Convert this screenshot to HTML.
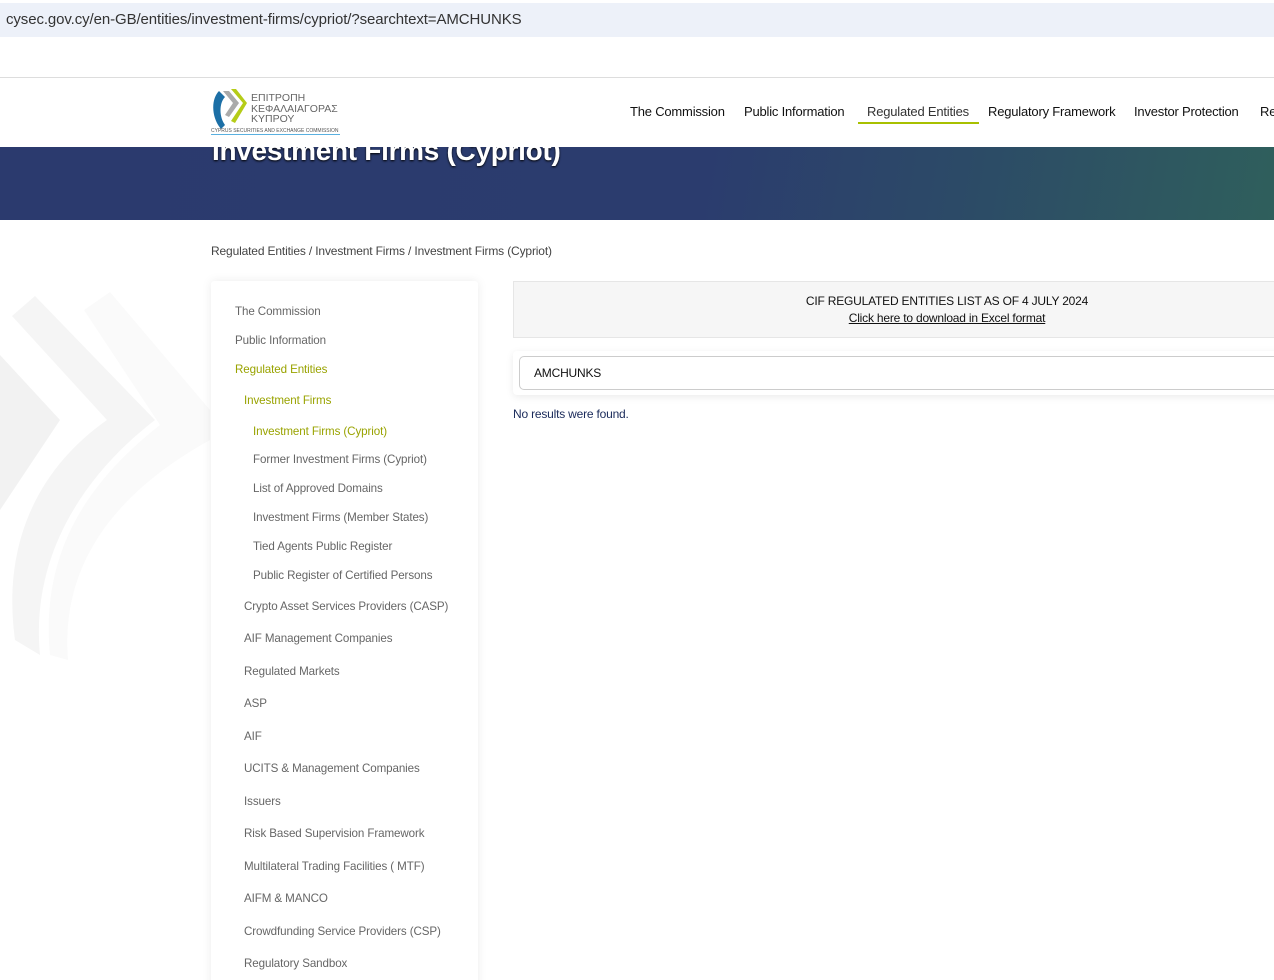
<!DOCTYPE html>
<html style="overflow:hidden;height:980px"><head><meta charset="utf-8"><style>
*{margin:0;padding:0;box-sizing:border-box}
body{width:1274px;height:980px;overflow:hidden;background:#fff;font-family:"Liberation Sans",Arial,sans-serif;position:relative}
.abs{position:absolute;white-space:nowrap}
.url{top:3px;left:0;width:1274px;height:34px;background:#edf1f9}
.url span{position:absolute;left:6px;top:8px;font-size:15px;color:#333;letter-spacing:-0.1px}
.hdr{top:77px;left:0;width:1274px;height:70px;background:#fff;border-top:1px solid #ddd;z-index:2}
.nav{font-size:13px;color:#111;top:26px;letter-spacing:-0.2px}
.banner{top:147px;left:0;width:1274px;height:73px;background:linear-gradient(100deg,#2b3a6e 0%,#2b3c6e 55%,#2c4a67 75%,#2f5f5c 100%);overflow:hidden}
.banner h1{position:absolute;left:212px;top:-12px;font-size:28px;color:#fff;font-weight:bold;text-shadow:0 1px 2px #000;letter-spacing:-0.3px}
.side{top:281px;left:211px;width:267px;height:720px;background:#fff;box-shadow:0 0 10px rgba(0,0,0,.08);border-radius:3px}
.m{font-size:11.6px;color:#666;letter-spacing:-0.1px}
.g{color:#99a300}
</style></head><body>
<svg class="abs" style="left:0;top:280px" width="220" height="400" viewBox="0 0 220 400">
<path d="M0 75 L60 140 L0 230 Z" fill="#f2f2f2"/>
<path d="M12 36 L35 16 L155 140 C90 190 30 270 40 375 L15 360 C0 250 50 180 107 140 Z" fill="#f5f5f5"/>
<path d="M84 30 L110 12 L210 130 L210 160 C120 210 60 280 68 380 L50 375 C40 270 90 200 160 145 Z" fill="#fafafa"/>
</svg>
<div class="abs url"><span>cysec.gov.cy/en-GB/entities/investment-firms/cypriot/?searchtext=AMCHUNKS</span></div>
<div class="abs hdr">
<svg class="abs" style="left:211px;top:11px" width="40" height="44" viewBox="0 0 40 44"><path d="M8 2 C0 10 0 28 10 40 L14 36 C8 28 8 14 14 8 Z" fill="#1c6fa6"/><path d="M12 2 L22 14 L14 26 L18 28 L28 14 L18 2 Z" fill="#aaa"/><path d="M20 0 L32 14 L20 32 L24 34 L36 14 L25 0 Z" fill="#b5cc18"/></svg>
<div class="abs" style="left:251px;top:15px;font-size:10.5px;line-height:10.5px;color:#666">ΕΠΙΤΡΟΠΗ<br>ΚΕΦΑΛΑΙΑΓΟΡΑΣ<br>ΚΥΠΡΟΥ</div>
<div class="abs" style="left:211px;top:50px;font-size:5px;color:#555;border-bottom:1px solid #5ab0e0;width:129px">CYPRUS SECURITIES AND EXCHANGE COMMISSION</div>
<div class="abs nav" style="left:630px">The Commission</div>
<div class="abs nav" style="left:744px">Public Information</div>
<div class="abs nav" style="left:858px;width:121px;padding-left:9px;color:#333;border-bottom:2px solid #a8c000;padding-bottom:3px">Regulated Entities</div>
<div class="abs nav" style="left:988px">Regulatory Framework</div>
<div class="abs nav" style="left:1134px">Investor Protection</div>
<div class="abs nav" style="left:1260px">Re</div>
</div>
<div class="abs banner"><h1>Investment Firms (Cypriot)</h1></div>
<div class="abs" style="left:211px;top:244px;font-size:12px;color:#444;letter-spacing:-0.15px">Regulated Entities / Investment Firms / Investment Firms (Cypriot)</div>
<div class="abs side"></div>
<div class="abs m" style="left:235px;top:305px">The Commission</div>
<div class="abs m" style="left:235px;top:334px">Public Information</div>
<div class="abs m g" style="left:235px;top:363px">Regulated Entities</div>
<div class="abs m g" style="left:244px;top:394px">Investment Firms</div>
<div class="abs m g" style="left:253px;top:425px">Investment Firms (Cypriot)</div>
<div class="abs m" style="left:253px;top:453px">Former Investment Firms (Cypriot)</div>
<div class="abs m" style="left:253px;top:482px">List of Approved Domains</div>
<div class="abs m" style="left:253px;top:511px">Investment Firms (Member States)</div>
<div class="abs m" style="left:253px;top:540px">Tied Agents Public Register</div>
<div class="abs m" style="left:253px;top:569px">Public Register of Certified Persons</div>
<div class="abs m" style="left:244px;top:600px">Crypto Asset Services Providers (CASP)</div>
<div class="abs m" style="left:244px;top:632px">AIF Management Companies</div>
<div class="abs m" style="left:244px;top:665px">Regulated Markets</div>
<div class="abs m" style="left:244px;top:697px">ASP</div>
<div class="abs m" style="left:244px;top:730px">AIF</div>
<div class="abs m" style="left:244px;top:762px">UCITS &amp; Management Companies</div>
<div class="abs m" style="left:244px;top:795px">Issuers</div>
<div class="abs m" style="left:244px;top:827px">Risk Based Supervision Framework</div>
<div class="abs m" style="left:244px;top:860px">Multilateral Trading Facilities ( MTF)</div>
<div class="abs m" style="left:244px;top:892px">AIFM &amp; MANCO</div>
<div class="abs m" style="left:244px;top:925px">Crowdfunding Service Providers (CSP)</div>
<div class="abs m" style="left:244px;top:957px">Regulatory Sandbox</div>
<div class="abs" style="left:513px;top:281px;width:770px;height:57px;background:#f6f6f6;border:1px solid #e6e6e6"></div>
<div class="abs" style="left:513px;top:293px;width:868px;text-align:center;font-size:12px;color:#111;line-height:17px;letter-spacing:-0.2px">CIF REGULATED ENTITIES LIST AS OF 4 JULY 2024<br><u>Click here to download in Excel format</u></div>
<div class="abs" style="left:513px;top:351px;width:770px;height:44px;background:#fff;box-shadow:0 2px 8px rgba(0,0,0,.08);border-radius:4px"></div>
<div class="abs" style="left:519px;top:356px;width:770px;height:34px;border:1px solid #ccc;border-radius:5px;font-size:12px;color:#111;padding:9px 14px;letter-spacing:-0.2px">AMCHUNKS</div>
<div class="abs" style="left:513px;top:407px;font-size:12px;color:#1a2a5a;letter-spacing:-0.2px">No results were found.</div>
</body></html>
